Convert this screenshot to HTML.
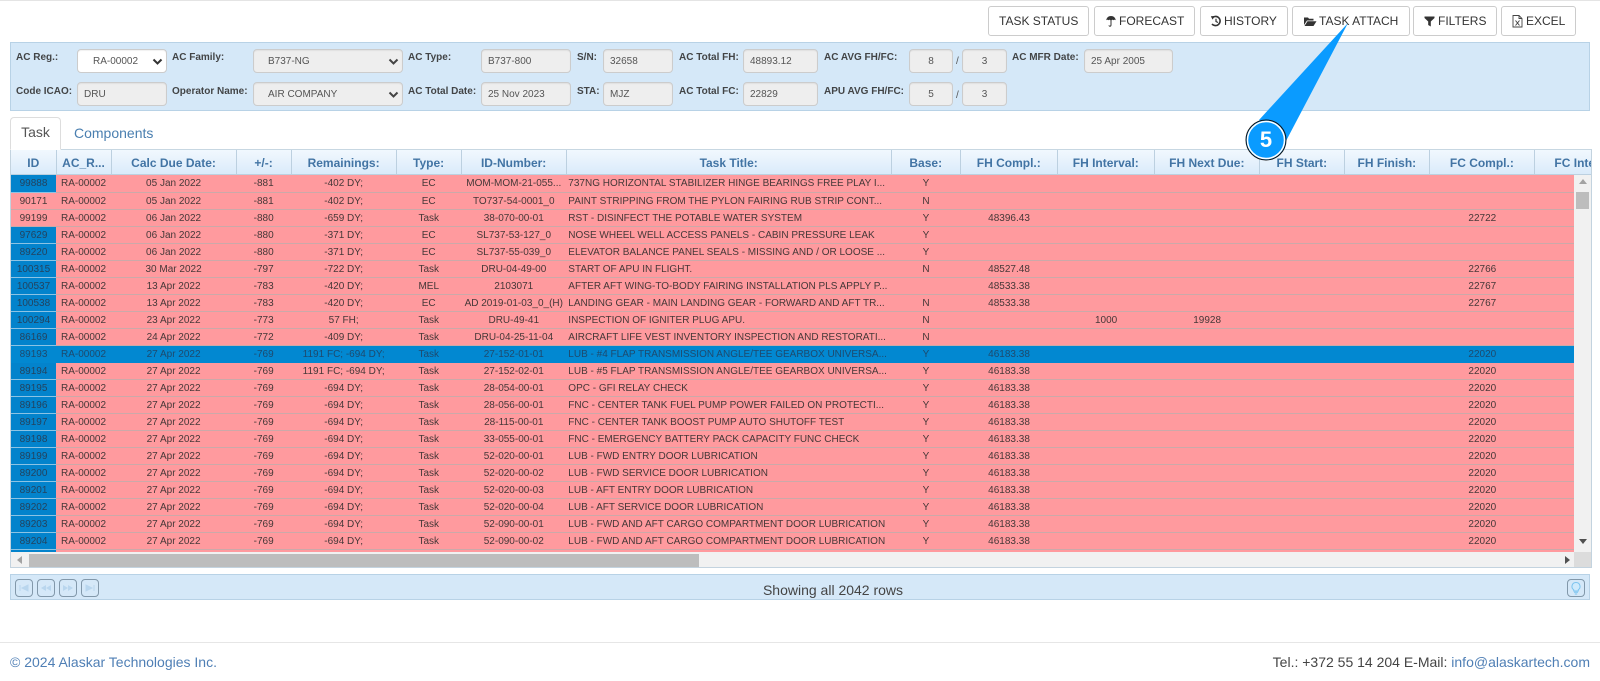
<!DOCTYPE html>
<html lang="en">
<head>
<meta charset="utf-8">
<title>Task</title>
<style>
*{box-sizing:border-box}
html,body{margin:0;padding:0;background:#fff}
body{width:1600px;height:681px;position:relative;overflow:hidden;font-family:"Liberation Sans",Arial,sans-serif;color:#333}
.a{position:absolute}
.topline{left:0;top:0;width:1600px;height:1px;background:#e4e4e4}
.btn{position:absolute;top:6px;height:30px;border:1px solid #ccc;border-radius:3px;background:#fff;font-size:12px;line-height:28px;color:#333;white-space:nowrap}
.btn span{position:absolute;top:0}
.btn svg{position:absolute;top:7px}
.panel{left:10px;top:42px;width:1580px;height:69px;background:#d5e8f8;border:1px solid #b8d2e6}
.l{position:absolute;font-size:10px;font-weight:bold;color:#333;line-height:12px;white-space:nowrap;-webkit-text-stroke:0;opacity:.9}
.i{position:absolute;height:24px;border:1px solid #ccc;border-radius:4px;background:#eee;font-size:10px;color:#555;line-height:24px;padding-left:6px;white-space:nowrap;box-shadow:inset 0 1px 1px rgba(0,0,0,.06)}
.i.c{padding-left:0;text-align:center}
.i svg{position:absolute;top:8px}
.s{position:absolute;font-size:10px;color:#555;line-height:12px}
.tab{left:10px;top:117px;width:51px;height:33px;background:#fff;border:1px solid #ddd;border-bottom:1px solid #fff;border-radius:4px 4px 0 0;font-size:14px;line-height:28px;text-align:center;color:#555;z-index:3}
.tab2{left:74px;top:124px;font-size:14px;line-height:18px;color:#4a7fb0}
.grid{left:10px;top:149px;width:1582px;height:419px;border:1px solid #c3d3df;border-top:1px solid #c7d7e2;overflow:hidden;background:#fff}
table{border-collapse:collapse;table-layout:fixed;width:1630px}
.hd{position:absolute;left:0;top:0;width:1582px;height:25px;overflow:hidden;background:linear-gradient(#f1f8fe,#d9eafa)}
.hd th{height:24px;font-size:12px;font-weight:bold;color:#4274a4;text-align:center;border-right:1px solid #bcd0e0;border-bottom:1px solid #bcd0e0;padding:2px 0 0;white-space:nowrap;overflow:hidden}
.bd{position:absolute;left:0;top:25px;width:1563px;height:377px;overflow:hidden;background:#ff9a9e}
.bd td{height:17px;padding:1px 0 0;font-size:10px;line-height:15px;text-align:center;color:#463838;border-bottom:1px solid #cba9a9;white-space:nowrap;overflow:hidden}
.bd td.t{text-align:left;padding-left:2px}
.bd td.b{background:#0383cc;color:#23435f;border-bottom:1px solid #8cc3e4}
.bd tr{background:#ff9a9e}
.bd tr.sel{background:#0288d1}
.bd tr.sel td{color:#1e4a6e;border-bottom:1px solid #0288d1}
.vs{position:absolute;left:1563px;top:25px;width:18px;height:377px;background:#f1f1f1}
.hs{position:absolute;left:0;top:402px;width:1563px;height:15px;background:#f1f1f1}
.cn{position:absolute;left:1563px;top:402px;width:18px;height:15px;background:#dcdcdc}
.pager{left:10px;top:574px;width:1580px;height:26px;background:#d5e8f8;border:1px solid #b8d2e6}
.pb{position:absolute;top:4px;width:18px;height:18px;border:1px solid #8298aa;border-radius:4px}
.pb svg{position:absolute;left:0;top:0}
.show{left:10px;top:582px;width:1646px;text-align:center;font-size:14px;line-height:17px;color:#444}
.ft{left:0;top:642px;width:1600px;height:1px;background:#e6e6e6}
.f1{left:10px;top:654px;font-size:14px;line-height:16px;color:#4f7fb5;white-space:nowrap}
.f2{right:10px;top:654px;font-size:14px;line-height:16px;color:#444;white-space:nowrap}
.f2 span{color:#4f7fb5}
.callout{left:0;top:0;z-index:9;pointer-events:none}
.num{left:1246px;top:120px;width:40px;height:40px;line-height:40px;text-align:center;font-size:22px;font-weight:bold;color:#fff;z-index:10}
</style>
</head>
<body>
<div class="a topline"></div>

<div class="btn" style="left:988px;width:101px"><span style="left:10px">TASK STATUS</span></div>
<div class="btn" style="left:1094px;width:101px">
<svg style="left:10px" width="12" height="14" viewBox="0 0 12 14"><path d="M6 2C3.500 2 1.600 3.600 1.200 6.300c.8-.7 1.600-.7 2.300 0 .6-.7 1.300-.7 2-.1V11c0 .9-1.100.9-1.300.2l-.7.200C3.700 13.200 6.500 13.300 6.500 11V6.200c.7-.6 1.400-.6 2 .1.700-.7 1.500-.7 2.300 0C10.400 3.600 8.500 2 6 2z" fill="#333"/></svg>
<span style="left:24px">FORECAST</span></div>
<div class="btn" style="left:1200px;width:88px">
<svg style="left:9px" width="12" height="14" viewBox="0 0 12 14"><path d="M2.500 3.500A4.600 4.600 0 1 1 2 10" fill="none" stroke="#333" stroke-width="1.600"/><path d="M.8 2.200L4.800 2 2.600 5.600z" fill="#333"/><path d="M6 4.800V7.500L8 8.500" fill="none" stroke="#333" stroke-width="1.200"/></svg>
<span style="left:23px">HISTORY</span></div>
<div class="btn" style="left:1292px;width:118px">
<svg style="left:10px" width="14" height="14" viewBox="0 0 14 14"><path d="M1 11V3.500h4l1 1.300h4.500V6.500H4L1 11z" fill="#333"/><path d="M4.500 7.300H13.500L10.500 12H1.500z" fill="#333"/></svg>
<span style="left:26px">TASK ATTACH</span></div>
<div class="btn" style="left:1413px;width:84px">
<svg style="left:10px" width="11" height="14" viewBox="0 0 11 14"><path d="M.5 2.500H10.500V4L6.800 7.500V12.500L4.200 11V7.500L.5 4z" fill="#333"/></svg>
<span style="left:24px">FILTERS</span></div>
<div class="btn" style="left:1501px;width:75px">
<svg style="left:10px" width="11" height="14" viewBox="0 0 11 14"><path d="M1 1.500H7L10 4.500V13H1z" fill="#fff" stroke="#444" stroke-width=".9"/><path d="M7 1.500V4.500H10" fill="none" stroke="#444" stroke-width=".9"/><path d="M3.500 6.500L7.500 11.500M7.500 6.500L3.500 11.500" stroke="#444" stroke-width="1"/></svg>
<span style="left:24px">EXCEL</span></div>

<div class="a panel"></div>
<div class="l" style="left:16px;top:52px">AC Reg.:</div>
<div class="i" style="left:77px;top:49px;width:90px;background:#fff;padding-left:15px">RA-00002<svg style="left:74px" width="11" height="8" viewBox="0 0 11 8"><path d="M1.500 1.500L5.500 5.500L9.500 1.500" fill="none" stroke="#333" stroke-width="2"/></svg></div>
<div class="l" style="left:172px;top:52px">AC Family:</div>
<div class="i" style="left:253px;top:49px;width:150px;padding-left:14px">B737-NG<svg style="left:134px" width="11" height="8" viewBox="0 0 11 8"><path d="M1.500 1.500L5.500 5.500L9.500 1.500" fill="none" stroke="#444" stroke-width="2"/></svg></div>
<div class="l" style="left:408px;top:52px">AC Type:</div>
<div class="i" style="left:481px;top:49px;width:90px">B737-800</div>
<div class="l" style="left:577px;top:52px">S/N:</div>
<div class="i" style="left:603px;top:49px;width:70px">32658</div>
<div class="l" style="left:679px;top:52px">AC Total FH:</div>
<div class="i" style="left:743px;top:49px;width:75px">48893.12</div>
<div class="l" style="left:824px;top:52px">AC AVG FH/FC:</div>
<div class="i c" style="left:909px;top:49px;width:44px">8</div>
<div class="s" style="left:956px;top:56px">/</div>
<div class="i c" style="left:962px;top:49px;width:45px">3</div>
<div class="l" style="left:1012px;top:52px">AC MFR Date:</div>
<div class="i" style="left:1084px;top:49px;width:89px">25 Apr 2005</div>

<div class="l" style="left:16px;top:86px">Code ICAO:</div>
<div class="i" style="left:77px;top:82px;width:90px">DRU</div>
<div class="l" style="left:172px;top:86px">Operator Name:</div>
<div class="i" style="left:253px;top:82px;width:150px;padding-left:14px">AIR COMPANY<svg style="left:134px" width="11" height="8" viewBox="0 0 11 8"><path d="M1.500 1.500L5.500 5.500L9.500 1.500" fill="none" stroke="#444" stroke-width="2"/></svg></div>
<div class="l" style="left:408px;top:86px">AC Total Date:</div>
<div class="i" style="left:481px;top:82px;width:90px">25 Nov 2023</div>
<div class="l" style="left:577px;top:86px">STA:</div>
<div class="i" style="left:603px;top:82px;width:70px">MJZ</div>
<div class="l" style="left:679px;top:86px">AC Total FC:</div>
<div class="i" style="left:743px;top:82px;width:75px">22829</div>
<div class="l" style="left:824px;top:86px">APU AVG FH/FC:</div>
<div class="i c" style="left:909px;top:82px;width:44px">5</div>
<div class="s" style="left:956px;top:90px">/</div>
<div class="i c" style="left:962px;top:82px;width:45px">3</div>

<div class="a tab">Task</div>
<div class="a tab2">Components</div>

<div class="a grid">
<div class="hd"><table>
<colgroup><col style="width:45px"><col style="width:55px"><col style="width:125px"><col style="width:55px"><col style="width:105px"><col style="width:65px"><col style="width:105px"><col style="width:325px"><col style="width:69px"><col style="width:97px"><col style="width:97px"><col style="width:105px"><col style="width:85px"><col style="width:85px"><col style="width:105px"><col style="width:106px"></colgroup>
<tr><th>ID</th><th>AC_R...</th><th>Calc Due Date:</th><th>+/-:</th><th>Remainings:</th><th>Type:</th><th>ID-Number:</th><th>Task Title:</th><th>Base:</th><th>FH Compl.:</th><th>FH Interval:</th><th>FH Next Due:</th><th>FH Start:</th><th>FH Finish:</th><th>FC Compl.:</th><th>FC Interval:</th></tr>
</table></div>
<div class="bd"><table>
<colgroup><col style="width:45px"><col style="width:55px"><col style="width:125px"><col style="width:55px"><col style="width:105px"><col style="width:65px"><col style="width:105px"><col style="width:325px"><col style="width:69px"><col style="width:97px"><col style="width:97px"><col style="width:105px"><col style="width:85px"><col style="width:85px"><col style="width:105px"><col style="width:106px"></colgroup>
<tr><td class="b">99888</td><td>RA-00002</td><td>05 Jan 2022</td><td>-881</td><td>-402 DY;</td><td>EC</td><td>MOM-MOM-21-055...</td><td class="t">737NG HORIZONTAL STABILIZER HINGE BEARINGS FREE PLAY I...</td><td>Y</td><td></td><td></td><td></td><td></td><td></td><td></td><td></td></tr>
<tr><td>90171</td><td>RA-00002</td><td>05 Jan 2022</td><td>-881</td><td>-402 DY;</td><td>EC</td><td>TO737-54-0001_0</td><td class="t">PAINT STRIPPING FROM THE PYLON FAIRING RUB STRIP CONT...</td><td>N</td><td></td><td></td><td></td><td></td><td></td><td></td><td></td></tr>
<tr><td>99199</td><td>RA-00002</td><td>06 Jan 2022</td><td>-880</td><td>-659 DY;</td><td>Task</td><td>38-070-00-01</td><td class="t">RST - DISINFECT THE POTABLE WATER SYSTEM</td><td>Y</td><td>48396.43</td><td></td><td></td><td></td><td></td><td>22722</td><td></td></tr>
<tr><td class="b">97629</td><td>RA-00002</td><td>06 Jan 2022</td><td>-880</td><td>-371 DY;</td><td>EC</td><td>SL737-53-127_0</td><td class="t">NOSE WHEEL WELL ACCESS PANELS - CABIN PRESSURE LEAK</td><td>Y</td><td></td><td></td><td></td><td></td><td></td><td></td><td></td></tr>
<tr><td class="b">89220</td><td>RA-00002</td><td>06 Jan 2022</td><td>-880</td><td>-371 DY;</td><td>EC</td><td>SL737-55-039_0</td><td class="t">ELEVATOR BALANCE PANEL SEALS - MISSING AND / OR LOOSE ...</td><td>Y</td><td></td><td></td><td></td><td></td><td></td><td></td><td></td></tr>
<tr><td class="b">100315</td><td>RA-00002</td><td>30 Mar 2022</td><td>-797</td><td>-722 DY;</td><td>Task</td><td>DRU-04-49-00</td><td class="t">START OF APU IN FLIGHT.</td><td>N</td><td>48527.48</td><td></td><td></td><td></td><td></td><td>22766</td><td></td></tr>
<tr><td class="b">100537</td><td>RA-00002</td><td>13 Apr 2022</td><td>-783</td><td>-420 DY;</td><td>MEL</td><td>2103071</td><td class="t">AFTER AFT WING-TO-BODY FAIRING INSTALLATION PLS APPLY P...</td><td></td><td>48533.38</td><td></td><td></td><td></td><td></td><td>22767</td><td></td></tr>
<tr><td class="b">100538</td><td>RA-00002</td><td>13 Apr 2022</td><td>-783</td><td>-420 DY;</td><td>EC</td><td>AD 2019-01-03_0_(H)</td><td class="t">LANDING GEAR - MAIN LANDING GEAR - FORWARD AND AFT TR...</td><td>N</td><td>48533.38</td><td></td><td></td><td></td><td></td><td>22767</td><td></td></tr>
<tr><td class="b">100294</td><td>RA-00002</td><td>23 Apr 2022</td><td>-773</td><td>57 FH;</td><td>Task</td><td>DRU-49-41</td><td class="t">INSPECTION OF IGNITER PLUG APU.</td><td>N</td><td></td><td>1000</td><td>19928</td><td></td><td></td><td></td><td></td></tr>
<tr><td class="b">86169</td><td>RA-00002</td><td>24 Apr 2022</td><td>-772</td><td>-409 DY;</td><td>Task</td><td>DRU-04-25-11-04</td><td class="t">AIRCRAFT LIFE VEST INVENTORY INSPECTION AND RESTORATI...</td><td>N</td><td></td><td></td><td></td><td></td><td></td><td></td><td></td></tr>
<tr class="sel"><td>89193</td><td>RA-00002</td><td>27 Apr 2022</td><td>-769</td><td>1191 FC; -694 DY;</td><td>Task</td><td>27-152-01-01</td><td class="t">LUB - #4 FLAP TRANSMISSION ANGLE/TEE GEARBOX UNIVERSA...</td><td>Y</td><td>46183.38</td><td></td><td></td><td></td><td></td><td>22020</td><td></td></tr>
<tr><td class="b">89194</td><td>RA-00002</td><td>27 Apr 2022</td><td>-769</td><td>1191 FC; -694 DY;</td><td>Task</td><td>27-152-02-01</td><td class="t">LUB - #5 FLAP TRANSMISSION ANGLE/TEE GEARBOX UNIVERSA...</td><td>Y</td><td>46183.38</td><td></td><td></td><td></td><td></td><td>22020</td><td></td></tr>
<tr><td class="b">89195</td><td>RA-00002</td><td>27 Apr 2022</td><td>-769</td><td>-694 DY;</td><td>Task</td><td>28-054-00-01</td><td class="t">OPC - GFI RELAY CHECK</td><td>Y</td><td>46183.38</td><td></td><td></td><td></td><td></td><td>22020</td><td></td></tr>
<tr><td class="b">89196</td><td>RA-00002</td><td>27 Apr 2022</td><td>-769</td><td>-694 DY;</td><td>Task</td><td>28-056-00-01</td><td class="t">FNC - CENTER TANK FUEL PUMP POWER FAILED ON PROTECTI...</td><td>Y</td><td>46183.38</td><td></td><td></td><td></td><td></td><td>22020</td><td></td></tr>
<tr><td class="b">89197</td><td>RA-00002</td><td>27 Apr 2022</td><td>-769</td><td>-694 DY;</td><td>Task</td><td>28-115-00-01</td><td class="t">FNC - CENTER TANK BOOST PUMP AUTO SHUTOFF TEST</td><td>Y</td><td>46183.38</td><td></td><td></td><td></td><td></td><td>22020</td><td></td></tr>
<tr><td class="b">89198</td><td>RA-00002</td><td>27 Apr 2022</td><td>-769</td><td>-694 DY;</td><td>Task</td><td>33-055-00-01</td><td class="t">FNC - EMERGENCY BATTERY PACK CAPACITY FUNC CHECK</td><td>Y</td><td>46183.38</td><td></td><td></td><td></td><td></td><td>22020</td><td></td></tr>
<tr><td class="b">89199</td><td>RA-00002</td><td>27 Apr 2022</td><td>-769</td><td>-694 DY;</td><td>Task</td><td>52-020-00-01</td><td class="t">LUB - FWD ENTRY DOOR LUBRICATION</td><td>Y</td><td>46183.38</td><td></td><td></td><td></td><td></td><td>22020</td><td></td></tr>
<tr><td class="b">89200</td><td>RA-00002</td><td>27 Apr 2022</td><td>-769</td><td>-694 DY;</td><td>Task</td><td>52-020-00-02</td><td class="t">LUB - FWD SERVICE DOOR LUBRICATION</td><td>Y</td><td>46183.38</td><td></td><td></td><td></td><td></td><td>22020</td><td></td></tr>
<tr><td class="b">89201</td><td>RA-00002</td><td>27 Apr 2022</td><td>-769</td><td>-694 DY;</td><td>Task</td><td>52-020-00-03</td><td class="t">LUB - AFT ENTRY DOOR LUBRICATION</td><td>Y</td><td>46183.38</td><td></td><td></td><td></td><td></td><td>22020</td><td></td></tr>
<tr><td class="b">89202</td><td>RA-00002</td><td>27 Apr 2022</td><td>-769</td><td>-694 DY;</td><td>Task</td><td>52-020-00-04</td><td class="t">LUB - AFT SERVICE DOOR LUBRICATION</td><td>Y</td><td>46183.38</td><td></td><td></td><td></td><td></td><td>22020</td><td></td></tr>
<tr><td class="b">89203</td><td>RA-00002</td><td>27 Apr 2022</td><td>-769</td><td>-694 DY;</td><td>Task</td><td>52-090-00-01</td><td class="t">LUB - FWD AND AFT CARGO COMPARTMENT DOOR LUBRICATION</td><td>Y</td><td>46183.38</td><td></td><td></td><td></td><td></td><td>22020</td><td></td></tr>
<tr><td class="b">89204</td><td>RA-00002</td><td>27 Apr 2022</td><td>-769</td><td>-694 DY;</td><td>Task</td><td>52-090-00-02</td><td class="t">LUB - FWD AND AFT CARGO COMPARTMENT DOOR LUBRICATION</td><td>Y</td><td>46183.38</td><td></td><td></td><td></td><td></td><td>22020</td><td></td></tr>
<tr><td class="b"></td><td></td><td></td><td></td><td></td><td></td><td></td><td></td><td></td><td></td><td></td><td></td><td></td><td></td><td></td><td></td></tr>
</table></div>
<div class="vs">
<svg class="a" style="left:4px;top:3px" width="10" height="8" viewBox="0 0 10 8"><path d="M5 1L9 6H1z" fill="#a3a3a3"/></svg>
<div class="a" style="left:2px;top:17px;width:13px;height:17px;background:#bdbdbd"></div>
<svg class="a" style="left:4px;top:362px" width="10" height="8" viewBox="0 0 10 8"><path d="M1 2H9L5 7z" fill="#505050"/></svg>
</div>
<div class="hs">
<svg class="a" style="left:5px;top:3px" width="8" height="10" viewBox="0 0 8 10"><path d="M6 1V9L1 5z" fill="#a3a3a3"/></svg>
<div class="a" style="left:18px;top:2px;width:670px;height:13px;background:#bdbdbd"></div>
<svg class="a" style="left:1552px;top:3px" width="8" height="10" viewBox="0 0 8 10"><path d="M2 1V9L7 5z" fill="#505050"/></svg>
</div>
<div class="cn"></div>
</div>

<div class="a pager">
<div class="pb" style="left:4px"><svg width="16" height="16" viewBox="0 0 16 16"><path d="M4 5V11M12 5V11L6 8z" fill="#b9d6ee" stroke="#b9d6ee"/></svg></div>
<div class="pb" style="left:26px"><svg width="16" height="16" viewBox="0 0 16 16"><path d="M8 5V11L3 8zM13 5V11L8 8z" fill="#b9d6ee"/></svg></div>
<div class="pb" style="left:48px"><svg width="16" height="16" viewBox="0 0 16 16"><path d="M3 5V11L8 8zM8 5V11L13 8z" fill="#b9d6ee"/></svg></div>
<div class="pb" style="left:70px"><svg width="16" height="16" viewBox="0 0 16 16"><path d="M12 5V11M4 5V11L10 8z" fill="#b9d6ee" stroke="#b9d6ee"/></svg></div>
<div class="pb" style="left:1556px"><svg width="16" height="16" viewBox="0 0 16 16"><path d="M8 2.500A4 4 0 0 0 5.700 9.800V11H10.300V9.800A4 4 0 0 0 8 2.500z" fill="#cfeafc" stroke="#7cc4ef" stroke-width="1"/><path d="M6 12.300H10M6.800 14H9.200" stroke="#7cc4ef" stroke-width="1"/></svg></div>
</div>
<div class="a show">Showing all 2042 rows</div>

<div class="a ft"></div>
<div class="a f1">© 2024 Alaskar Technologies Inc.</div>
<div class="a f2">Tel.: +372 55 14 204 E-Mail: <span>info@alaskartech.com</span></div>

<svg class="a callout" width="1600" height="681" viewBox="0 0 1600 681">
<path d="M1348 23L1259 120L1286 141z" fill="#0a9bff"/>
<circle cx="1266" cy="140" r="20" fill="#0a9bff" stroke="#111" stroke-width="1"/>
<circle cx="1266" cy="140" r="18.500" fill="none" stroke="#fff" stroke-width="1.500"/>
</svg>
<div class="a num">5</div>
</body>
</html>
